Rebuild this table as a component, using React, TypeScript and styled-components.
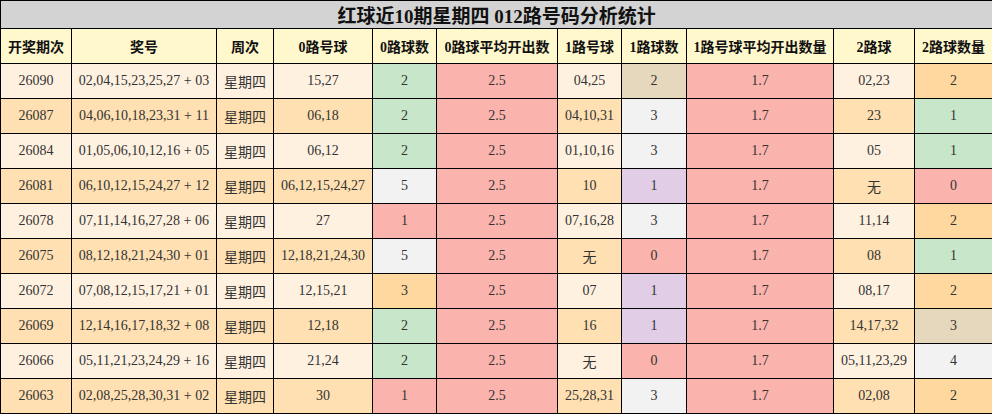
import React from 'react'
import styled, { createGlobalStyle } from 'styled-components'

type Tone = 'green' | 'red' | 'tan' | 'gray' | 'purple' | 'orange'

interface Row {
  issue: string
  numbers: string
  week: string
  zero: string
  zeroCount: number
  zeroTone: Tone
  one: string
  oneCount: number
  oneTone: Tone
  two: string
  twoCount: number
  twoTone: Tone
}

const tones: Record<Tone, string> = {
  green: '#c8e6c9',
  red: '#fbb3ad',
  tan: '#e6d8bc',
  gray: '#f2f2f2',
  purple: '#e1cde6',
  orange: '#ffd8a0',
}

const rows: Row[] = [
  { issue: '26090', numbers: '02,04,15,23,25,27 + 03', week: '星期四', zero: '15,27', zeroCount: 2, zeroTone: 'green', one: '04,25', oneCount: 2, oneTone: 'tan', two: '02,23', twoCount: 2, twoTone: 'orange' },
  { issue: '26087', numbers: '04,06,10,18,23,31 + 11', week: '星期四', zero: '06,18', zeroCount: 2, zeroTone: 'green', one: '04,10,31', oneCount: 3, oneTone: 'gray', two: '23', twoCount: 1, twoTone: 'green' },
  { issue: '26084', numbers: '01,05,06,10,12,16 + 05', week: '星期四', zero: '06,12', zeroCount: 2, zeroTone: 'green', one: '01,10,16', oneCount: 3, oneTone: 'gray', two: '05', twoCount: 1, twoTone: 'green' },
  { issue: '26081', numbers: '06,10,12,15,24,27 + 12', week: '星期四', zero: '06,12,15,24,27', zeroCount: 5, zeroTone: 'gray', one: '10', oneCount: 1, oneTone: 'purple', two: '无', twoCount: 0, twoTone: 'red' },
  { issue: '26078', numbers: '07,11,14,16,27,28 + 06', week: '星期四', zero: '27', zeroCount: 1, zeroTone: 'red', one: '07,16,28', oneCount: 3, oneTone: 'gray', two: '11,14', twoCount: 2, twoTone: 'orange' },
  { issue: '26075', numbers: '08,12,18,21,24,30 + 01', week: '星期四', zero: '12,18,21,24,30', zeroCount: 5, zeroTone: 'gray', one: '无', oneCount: 0, oneTone: 'red', two: '08', twoCount: 1, twoTone: 'green' },
  { issue: '26072', numbers: '07,08,12,15,17,21 + 01', week: '星期四', zero: '12,15,21', zeroCount: 3, zeroTone: 'orange', one: '07', oneCount: 1, oneTone: 'purple', two: '08,17', twoCount: 2, twoTone: 'orange' },
  { issue: '26069', numbers: '12,14,16,17,18,32 + 08', week: '星期四', zero: '12,18', zeroCount: 2, zeroTone: 'green', one: '16', oneCount: 1, oneTone: 'purple', two: '14,17,32', twoCount: 3, twoTone: 'tan' },
  { issue: '26066', numbers: '05,11,21,23,24,29 + 16', week: '星期四', zero: '21,24', zeroCount: 2, zeroTone: 'green', one: '无', oneCount: 0, oneTone: 'red', two: '05,11,23,29', twoCount: 4, twoTone: 'gray' },
  { issue: '26063', numbers: '02,08,25,28,30,31 + 02', week: '星期四', zero: '30', zeroCount: 1, zeroTone: 'red', one: '25,28,31', oneCount: 3, oneTone: 'gray', two: '02,08', twoCount: 2, twoTone: 'orange' },
]

const columns = [
  { label: '开奖期次', width: 71 },
  { label: '奖号', width: 145 },
  { label: '周次', width: 57 },
  { label: '0路号球', width: 99 },
  { label: '0路球数', width: 64 },
  { label: '0路球平均开出数', width: 121 },
  { label: '1路号球', width: 64 },
  { label: '1路球数', width: 65 },
  { label: '1路号球平均开出数量', width: 147 },
  { label: '2路球', width: 81 },
  { label: '2路球数量', width: 78 },
]

const App: React.FC = () => {
  return (
    <>
      <GlobalStyle />
      <Table>
        <colgroup>
          {columns.map((c) => (
            <col key={c.label} style={{ width: c.width }} />
          ))}
        </colgroup>
        <thead>
          <tr>
            <Title colSpan={columns.length}>红球近10期星期四 012路号码分析统计</Title>
          </tr>
          <tr>
            {columns.map((c) => (
              <Head key={c.label}>{c.label}</Head>
            ))}
          </tr>
        </thead>
        <tbody>
          {rows.map((r, i) => (
            <BodyRow key={r.issue} $even={i % 2 === 1}>
              <Cell>{r.issue}</Cell>
              <Cell>{r.numbers}</Cell>
              <Cell>{r.week}</Cell>
              <Cell>{r.zero}</Cell>
              <Cell $tone={r.zeroTone}>{r.zeroCount}</Cell>
              <Cell $tone="red">2.5</Cell>
              <Cell>{r.one}</Cell>
              <Cell $tone={r.oneTone}>{r.oneCount}</Cell>
              <Cell $tone="red">1.7</Cell>
              <Cell>{r.two}</Cell>
              <Cell $tone={r.twoTone}>{r.twoCount}</Cell>
            </BodyRow>
          ))}
        </tbody>
      </Table>
    </>
  )
}

const GlobalStyle = createGlobalStyle`
  body {
    margin: 0;
    background: #ffffff;
    font-family: "Liberation Serif", "Noto Sans CJK SC", serif;
  }
`

const Table = styled.table`
  width: 992px;
  table-layout: fixed;
  border-collapse: collapse;
  border: 1px solid #000;
`

const Title = styled.th`
  height: 27px;
  padding: 0;
  background: #d3d3d3;
  border: 1px solid #000;
  font-size: 19px;
  font-weight: bold;
  color: #111;
  text-align: center;
`

const Head = styled.th`
  height: 34px;
  padding: 0;
  background: #fff8cc;
  border: 1px solid #000;
  font-size: 14px;
  font-weight: bold;
  color: #111;
  text-align: center;
  white-space: nowrap;
`

const BodyRow = styled.tr<{ $even: boolean }>`
  background: ${(p) => (p.$even ? '#ffe0b2' : '#fff1e0')};
`

const Cell = styled.td<{ $tone?: Tone }>`
  height: 34px;
  padding: 0;
  border: 1px solid #000;
  background: ${(p) => (p.$tone ? tones[p.$tone] : 'transparent')};
  font-size: 14px;
  color: #333;
  text-align: center;
  white-space: nowrap;
`

export default App
